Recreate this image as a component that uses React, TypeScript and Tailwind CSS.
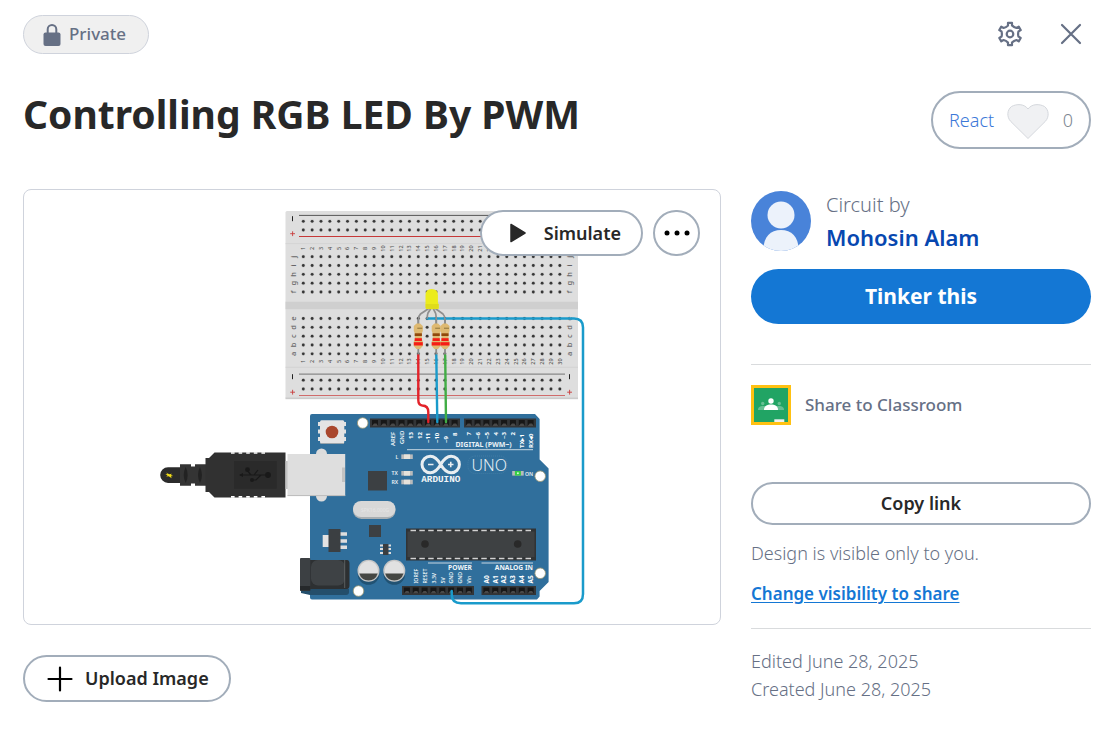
import type { ReactNode } from 'react'

const PITCH = 8.846
const range = (n: number) => Array.from({ length: n }, (_, i) => i)

function Side({ x, y, size = 5, fill = '#fff', bold = false, anchor = 'start', children }: {
  x: number; y: number; size?: number; fill?: string; bold?: boolean; anchor?: 'start' | 'middle' | 'end'; children: ReactNode
}) {
  return (
    <text transform={`translate(${x} ${y}) rotate(-90)`} fontSize={size} fill={fill} fontWeight={bold ? 700 : 500} textAnchor={anchor}>
      {children}
    </text>
  )
}

function Breadboard() {
  const rows = [221.3, 230, 256.7, 265.5, 274.3, 283.2, 292, 318.5, 327.3, 336.2, 345, 353.8, 380.2, 389]
  const letters: [string, number][] = [
    ['j', 256.7], ['i', 265.5], ['h', 274.3], ['g', 283.2], ['f', 292],
    ['e', 318.5], ['d', 327.3], ['c', 336.2], ['b', 345], ['a', 353.8],
  ]
  return (
    <g>
      <rect x="285.5" y="211" width="292.5" height="188" rx="1.5" fill="#dedede" />
      <rect x="285.5" y="397.5" width="292.5" height="1.7" fill="#cbcbcb" />
      <path d="M285.5 243.6H578M285.5 367.3H578" stroke="#d0d0d0" strokeWidth=".8" />
      <rect x="285.5" y="301.7" width="292.5" height="7.5" fill="#cfcfcf" />
      <path d="M299 215.4H565" stroke="#555" strokeWidth="1" />
      <path d="M299 374.2H565" stroke="#888" strokeWidth="1.2" />
      <path d="M299 236.5H565" stroke="#c63838" strokeWidth="1" />
      <path d="M299 395.5H565" stroke="#cf6b6b" strokeWidth="1.2" />
      {rows.map((y) => range(30).map((i) => (
        <g key={`${y}-${i}`}>
          <circle cx={303.3 + i * PITCH} cy={y} r="2" fill="#c6c6c6" />
          <circle cx={303.3 + i * PITCH} cy={y} r="1.4" fill="#363636" />
        </g>
      )))}
      {range(30).map((i) => (
        <g key={i}>
          <Side x={305.2 + i * PITCH} y={248.5} size={5.5} fill="#555" anchor="middle">{i + 1}</Side>
          <Side x={305.2 + i * PITCH} y={361.5} size={5.5} fill="#555" anchor="middle">{i + 1}</Side>
        </g>
      ))}
      {letters.map(([c, y]) => (
        <g key={c}>
          <Side x={295.5} y={y} size={7.5} fill="#666" anchor="middle">{c}</Side>
          <Side x={571.5} y={y} size={7.5} fill="#666" anchor="middle">{c}</Side>
        </g>
      ))}
      <path d="M292.5 216.2v5M292.5 374.2v5M569.5 374.2v5" stroke="#222" strokeWidth="1" />
      <path d="M290.2 233.7h4.8M292.6 231.3v4.8M290.2 392.2h4.8M292.6 389.8v4.8M567.2 392.2h4.8M569.6 389.8v4.8" stroke="#c83c3c" strokeWidth=".9" />
    </g>
  )
}

function Resistor({ x }: { x: number }) {
  return (
    <g>
      <path d={`M${x} 320V356`} stroke="#8c8c8c" strokeWidth="1.8" />
      <path d={`M${x - 1.8} 323.4h3.6l2.7 2.6v5l-1 2.5v6l1 2v4.5l-2.7 3h-3.6l-2.7-3v-4.5l1-2v-6l-1-2.5v-5z`} fill="#deb971" />
      <path d={`M${x - 1} 328.3h5`} stroke="#a4874a" strokeWidth="1.4" />
      <rect x={x - 3.6} y="333.3" width="7.2" height="2.7" fill="#90490c" />
      <rect x={x - 3.6} y="338.2" width="7.2" height="2.8" fill="#f51d16" />
      <rect x={x - 4.5} y="342.2" width="9" height="3.3" fill="#f51d16" />
    </g>
  )
}

function Header({ x, y, width, start, count }: { x: number; y: number; width: number; start: number; count: number }) {
  return (
    <g>
      <rect x={x} y={y} width={width} height="9" fill="#333537" />
      {range(count).map((i) => (
        <g key={i}>
          <rect x={start + i * PITCH - 3} y={y + 1.5} width="6" height="6" fill="#171717" />
          <path d={`M${start + i * PITCH - 3} ${y + 7.5}l2-2.5h2.5l1.5 2.5z`} fill="#494949" />
        </g>
      ))}
    </g>
  )
}

function BoardLed({ x, y, lit }: { x: number; y: number; lit?: boolean }) {
  return (
    <g>
      <rect x={x} y={y - 2.3} width="11.5" height="4.6" fill="#b9bbbc" />
      <rect x={x + 2.7} y={y - 2.3} width="6" height="4.6" fill={lit ? '#35cf45' : '#e6e2da'} />
      {lit && <circle cx={x + 5.7} cy={y} r="1" fill="#d9ffd9" />}
    </g>
  )
}

function UsbCable() {
  return (
    <g>
      <path d="M181 467.3h-13a7.8 7.8 0 0 0 0 15.6h13z" fill="#2b2b2b" />
      <path d="M166 472.600l3.200 1.600 2.800-.4-1.200 1.200 2.400 1-2.200.3.700 1.900-3-1.900-2.400.2 1.300-1.200-2.300-1.100 2.200-.2z" fill="#f2dd18" />
      <path d="M180 464.2h11v2.2h4v-2.2h11v21.6h-11v-2.4h-4v2.4h-11z" fill="#343434" />
      <path d="M185.7 467q4 8.5 0 16-4-8 0-16M200 467q4 8.5 0 16-4-8 0-16" fill="#222" />
      <path d="M205.5 458h3.5l5.5-5.6H285.500v45h-71l-5.500-5.500h-3.500z" fill="#313131" />
      <path d="M231 453h34M231 496.900h34" stroke="#fff" strokeWidth="1.700" strokeDasharray="3.600 4" />
      <rect x="234" y="461" width="42.700" height="27.700" fill="#2a2a2a" />
      <path d="M240 475h28M251 475l-4.500-5.300M251 475h3l4-5M252 480h4l5-5" stroke="#191919" strokeWidth="1.200" fill="none" />
      <path d="M239 475l4-2v4z" fill="#191919" />
      <circle cx="247.500" cy="469.700" r="2.400" fill="#191919" />
      <circle cx="252" cy="480" r="2" fill="#191919" />
      <circle cx="268" cy="475" r="2.900" fill="#191919" />
      <rect x="285.500" y="461" width="2.500" height="28" fill="#c3c3c3" />
      <circle cx="321.500" cy="454" r="5.500" fill="#dcdcdc" />
      <circle cx="321.500" cy="496" r="5.500" fill="#dcdcdc" />
      <rect x="287.500" y="454" width="57.700" height="42" fill="#dedede" />
      <path d="M287.500 495.600h57.700" stroke="#bbb" />
      <rect x="342" y="467.500" width="3" height="14.500" fill="#c2c2c2" />
    </g>
  )
}

function Arduino() {
  const digital = ['AREF', 'GND', '13', '12', '~11', '~10', '~9', '8']
  const digital2 = ['7', '~6', '~5', '4', '~3', '2', 'TX▸1', 'RX◂0']
  const power = ['IOREF', 'RESET', '3.3V', '5V', 'GND', 'GND', 'Vin']
  return (
    <g>
      <path d="M312 414H535l4.600 5v40.500l9 9V582l-9 9v5.500l-2.600 3H312a2 2 0 0 1-2-2V416a2 2 0 0 1 2-2z" fill="#306f9c" />
      {[[362.700, 423], [540.200, 476.200], [540.200, 573.300], [358.500, 591]].map(([x, y]) => (
        <circle key={`${x}-${y}`} cx={x} cy={y} r="5.300" fill="#fff" stroke="#9b9670" strokeWidth=".8" />
      ))}
      <path d="M318 422h28v4h-28zM318 429.500h28v4h-28zM318 437h28v4h-28z" fill="#e2e2e2" />
      <rect x="320" y="420.200" width="24.300" height="23.300" rx="1.500" fill="#e4e4e4" />
      <path d="M320.500 443.500h23.500" stroke="#9aa5ac" />
      <circle cx="332" cy="432" r="6.300" fill="#a9472d" />

      <Header x={370} y={418.500} width={90} start={375} count={10} />
      <Header x={464} y={418.500} width={72} start={468.700} count={8} />
      <Header x={402} y={586} width={72} start={406.900} count={8} />
      <Header x={481.500} y={586} width={54.500} start={486.400} count={6} />

      {digital.map((t, i) => (
        <Side key={t} x={395 + i * PITCH} y={i === 0 ? 446 : i === 1 ? 444 : t.startsWith('~') ? 443 : i === 7 ? 436 : 439} size={6} bold={i > 1}>{t}</Side>
      ))}
      {digital2.map((t, i) => (
        <Side key={t} x={471 + i * PITCH} y={i > 5 ? 448 : t.startsWith('~') ? 439 : 435.500} size={6} bold>{t}</Side>
      ))}
      <text x="455.500" y="447" fontSize="7" fontWeight="700" fill="#e8f0f5">DIGITAL (PWM~)</text>
      <path d="M407 449.700H533" stroke="#c7d7e2" strokeWidth="1" />

      <g fontSize="5.200" fontWeight="600" fill="#e8f0f5">
        <text x="395.500" y="458.600">L</text>
        <text x="391.500" y="475.300">TX</text>
        <text x="391.500" y="484">RX</text>
        <text x="525" y="475.500">ON</text>
      </g>
      <BoardLed x={401.300} y={456.700} />
      <BoardLed x={401.300} y={473.300} />
      <BoardLed x={401.300} y={482} />
      <BoardLed x={512.200} y={473.300} lit />

      <path d="M440.700 464.500c-3-5.400-6-8.300-10.400-8.300a8.300 8.300 0 0 0 0 16.600c4.400 0 7.400-3 10.400-8.300s6-8.300 10.400-8.300a8.300 8.300 0 0 1 0 16.600c-4.400 0-7.400-3-10.400-8.300z" fill="none" stroke="#e9eef1" strokeWidth="3" />
      <path d="M428 464.500h5.500M448 464.500h5.500M450.750 461.750v5.500" stroke="#e9eef1" strokeWidth="1.600" />
      <text x="440.800" y="482.300" fontSize="9.300" fontWeight="700" fill="#f2f5f7" textAnchor="middle" fontFamily="Liberation Mono, monospace" textRendering="geometricPrecision">
        ARDUINO
      </text>
      <rect x="468" y="456" width="39" height="17.500" rx="7" fill="none" stroke="#5289ad" strokeWidth=".5" strokeDasharray="1 1" />
      <text x="471.500" y="470.600" fontSize="16" fontWeight="300" fill="#e8f0f5">UNO</text>

      <rect x="368" y="471" width="19" height="19.500" fill="#3c4043" />
      <rect x="369" y="525" width="12" height="12" fill="#3c4043" />
      <rect x="353" y="502" width="42.500" height="17" rx="8.500" fill="#a8aeb2" />
      <rect x="353" y="501" width="42.500" height="16" rx="8" fill="#d8d8d8" />
      <text x="361" y="511.500" fontSize="5" fill="#e6e6e6">SPK16.000G</text>
      <path d="M380 545.500h11M380 549h11M380 553h11" stroke="#dedede" strokeWidth="2" />
      <rect x="383" y="544" width="5.500" height="11" fill="#3a3e41" />

      <rect x="322.700" y="535" width="7" height="12" fill="#e3e3e3" />
      <path d="M340 534h7M340 541h7M340 547.300h7" stroke="#dedede" strokeWidth="3.600" />
      <rect x="328.500" y="529" width="12" height="23" fill="#3b3f42" />

      <rect x="406" y="528.500" width="130" height="32" fill="#303335" />
      <rect x="407.500" y="531.500" width="127" height="25.500" fill="#3e4143" />
      {range(14).map((i) => (
        <path key={i} d={`M${410.500 + i * PITCH} 530.500h5.500m0 28h-5.500`} stroke="#d2d2d2" strokeWidth="1.300" />
      ))}
      <circle cx="425" cy="544" r="3.800" fill="#292929" />
      <circle cx="517.700" cy="544" r="3.800" fill="#292929" />

      {[368.500, 394.300].map((x) => (
        <g key={x}>
          <circle cx={x} cy="574" r="10.800" fill="#215273" />
          <circle cx={x} cy="570.700" r="11" fill="#c6c6c6" />
          <circle cx={x} cy="570.700" r="9.600" fill="#e1e1e1" />
          <path d={`M${x - 9.200} 573.600h18.400a9.600 9.600 0 0 1-18.400 0z`} fill="#454743" />
        </g>
      ))}

      <path d="M301 589h48v3a3 3 0 0 1-3 3h-36l-9-2z" fill="#244e6b" />
      <path d="M310 560h37q2.500 0 2.500 4v21q0 4-2.500 4h-37z" fill="#2d3032" />
      <rect x="311" y="560" width="34" height="25.500" rx="7" fill="#3e4245" />
      <path d="M344.700 560v28" stroke="#66696b" strokeWidth=".8" />
      <rect x="300" y="558" width="10.300" height="33" rx="1" fill="#3c4043" />
      <path d="M300 586h10.300v4.500H300z" fill="#26292b" />

      <path d="M428 563H472M481.500 563H533" stroke="#c7d7e2" strokeWidth="1" />
      <g fontSize="6.700" fontWeight="700" fill="#f1f5f8" textAnchor="end">
        <text x="472" y="570">POWER</text>
        <text x="533" y="570">ANALOG IN</text>
      </g>
      {power.map((t, i) => <Side key={i} x={418 + i * PITCH} y={583.500} size={5.200}>{t}</Side>)}
      {range(6).map((i) => <Side key={i} x={488.800 + i * PITCH} y={583.500} size={6.500} bold>{`A${i}`}</Side>)}
    </g>
  )
}

function Circuit() {
  return (
    <svg viewBox="24 190 696 434" className="block w-full font-['Noto_Sans',sans-serif]" role="img" aria-label="Circuit">
      <Breadboard />
      <Arduino />
      <UsbCable />
      <g fill="none" strokeLinecap="round">
        <path d="M427.300 318.500H574q9 0 9 9V594q0 9.300-9 9.300H461q-9.300 0-9.300-9V591" stroke="#1a9bcb" strokeWidth="2.500" />
        <g stroke="#8f8f8f" strokeWidth="1.700">
          <path d="M428 309l-7.500 5q-2.200 2-2.200 6v4M430.500 309l-2.500 4q-.8 2-.8 5M433.500 309l2 4q.8 2 .8 11M436 309l7 5q2 2 2 6v4" />
        </g>
      </g>
      <Resistor x={418.300} />
      <Resistor x={436.200} />
      <Resistor x={445} />
      <g fill="none" strokeWidth="2.400" strokeLinecap="round">
        <path d="M418.300 355.500V400q0 5 4 5.500 6 .3 6 6.500V422" stroke="#e3232a" />
        <path d="M436.300 355.500L437.300 422" stroke="#1a9bcb" />
        <path d="M445.200 355.500L446 422" stroke="#41ad45" />
      </g>
      <path d="M425.500 302.500v-7.500q0-6 6.200-6t6.200 6v7.500l.7 2v4.500h-12.500l-.6-2z" fill="#ecec1d" />
      <path d="M425.700 304h12.900v4.300q-6.500 2-12.900 0z" fill="#dfdc1c" />
    </svg>
  )
}

function LockIcon() {
  return (
    <svg width="18" height="24" viewBox="0 0 18 24" aria-hidden="true">
      <path d="M4.700 11V6.200a4.300 4.300 0 0 1 8.600 0V11" fill="none" stroke="#667085" strokeWidth="2" />
      <rect x=".5" y="9.500" width="17" height="13.500" rx="2" fill="#667085" />
    </svg>
  )
}

function gearPath() {
  const at = (x: number, y: number, deg: number) => {
    const a = (deg * Math.PI) / 180
    return `${(13 + x * Math.cos(a) - y * Math.sin(a)).toFixed(2)} ${(13 + x * Math.sin(a) + y * Math.cos(a)).toFixed(2)}`
  }
  const teeth = range(6).map((i) => {
    const d = i * 60
    return `${i ? 'L' : 'M'}${at(-2, -8.6, d)}L${at(-2, -11.2, d)}L${at(2, -11.2, d)}L${at(2, -8.6, d)}Q${at(3.9, -6.7, d)} ${at(-2, -8.6, d + 60)}`
  })
  return `${teeth.join('')}Z`
}

function GearIcon() {
  return (
    <svg width="26" height="26" viewBox="0 0 26 26" fill="none" stroke="#667085" strokeWidth="2.200" strokeLinejoin="round" aria-hidden="true">
      <path d={gearPath()} />
      <circle cx="13" cy="13" r="3.300" />
    </svg>
  )
}

function ClassroomIcon() {
  return (
    <svg width="40" height="40" viewBox="0 0 40 40" aria-hidden="true">
      <rect width="40" height="40" fill="#ffc112" />
      <rect x="3" y="3" width="34" height="34" fill="#21a464" />
      <g fill="#66bf93">
        <circle cx="11.700" cy="18.500" r="1.700" />
        <circle cx="28.300" cy="18.500" r="1.700" />
        <path d="M7 25c0-3 2-4 5-4h16c3 0 5 1 5 4z" />
      </g>
      <circle cx="20" cy="16" r="2.700" fill="#fff" />
      <path d="M13 25c0-4 3-5.500 7-5.500s7 1.500 7 5.500z" fill="#fff" />
      <rect x="23.300" y="34.300" width="10" height="2.700" fill="#f1f1f1" />
    </svg>
  )
}

function Avatar() {
  return (
    <svg width="60" height="60" viewBox="0 0 60 60" className="shrink-0" aria-hidden="true">
      <defs>
        <clipPath id="avatar"><circle cx="30" cy="30" r="30" /></clipPath>
      </defs>
      <g clipPath="url(#avatar)">
        <rect width="60" height="60" fill="#4983d9" />
        <circle cx="30" cy="24" r="13.500" fill="#ecf2fb" />
        <path d="M12.500 58c0-12 7-19 17.500-19s17.500 7 17.500 19v4h-35z" fill="#ecf2fb" />
      </g>
    </svg>
  )
}

export default function App() {
  return (
    <div className="min-h-screen bg-white pt-[15px] pr-4 pb-6 pl-[23px] font-['Noto_Sans',sans-serif] text-[18px] text-[#667085]">
      <header className="flex items-start justify-between">
        <div className="flex h-[39px] items-center gap-2 rounded-full border border-[#cfd3dc] bg-[#f0f0f0] pr-[22px] pl-[19px] text-[17px] leading-6 font-medium">
          <LockIcon />
          <span className="pb-0.5">Private</span>
        </div>
        <div className="flex items-center gap-[35px] pt-1.5">
          <button type="button" aria-label="Settings" className="cursor-pointer">
            <GearIcon />
          </button>
          <button type="button" aria-label="Close" className="mr-[7px] cursor-pointer">
            <svg width="26" height="26" viewBox="0 0 26 26" stroke="#667085" strokeWidth="2.200" strokeLinecap="round" aria-hidden="true">
              <path d="M4 4l18 18M22 4L4 22" />
            </svg>
          </button>
        </div>
      </header>

      <div className="mt-[37px] flex items-start justify-between">
        <h1 className="text-[39px] leading-[46px] font-bold text-[#282828]">Controlling RGB LED By PWM</h1>
        <button type="button" className="flex h-[58px] w-40 cursor-pointer items-center justify-between rounded-full border-2 border-[#a2adba] px-4">
          <span className="font-light text-[#3c78d8]">React</span>
          <svg width="42" height="38" viewBox="0 0 42 38" aria-hidden="true">
            <path d="M21 37.500L3.800 20.500C-.5 16 0 9 4.500 5.500 9.500 2.800 17 2.500 21 8 25 2.500 32.500 2.800 37.500 5.500 42 9 42.500 16 38.200 20.500z" fill="#f0f1f3" stroke="#d5d8dd" />
          </svg>
          <span className="font-light text-[#7d8791]">0</span>
        </button>
      </div>

      <main className="mt-10 flex items-start gap-[30px]">
        <section className="min-w-0 flex-1">
          <div className="relative overflow-hidden rounded-lg border border-[#cfd3dc]">
            <Circuit />
            <div className="absolute top-5 right-5 flex gap-2.5 text-[#282828]">
              <button type="button" className="flex h-[46px] cursor-pointer items-center gap-[18px] rounded-full border-2 border-[#a2adba] bg-white pr-5 pl-7 font-semibold">
                <svg width="16" height="20" viewBox="0 0 16 20" aria-hidden="true">
                  <path d="M1 1.500l14 8.500L1 18.500z" fill="#282828" stroke="#282828" strokeWidth="1.500" strokeLinejoin="round" />
                </svg>
                Simulate
              </button>
              <button type="button" aria-label="More" className="flex h-[46px] w-[47px] cursor-pointer items-center justify-center rounded-full border-2 border-[#a2adba] bg-white">
                <svg width="26" height="6" viewBox="0 0 26 6" aria-hidden="true">
                  <circle cx="3" cy="3" r="2.500" />
                  <circle cx="13" cy="3" r="2.500" />
                  <circle cx="23" cy="3" r="2.500" />
                </svg>
              </button>
            </div>
          </div>
          <button type="button" className="mt-[30px] flex h-[47px] cursor-pointer items-center gap-3 rounded-full border-2 border-[#a2adba] pr-5 pl-[22px] font-semibold text-[#282828]">
            <svg width="26" height="26" viewBox="0 0 26 26" stroke="#000" strokeWidth="2.200" strokeLinecap="round" aria-hidden="true">
              <path d="M13 1.500v23M1.500 13h23" />
            </svg>
            Upload Image
          </button>
        </section>

        <aside className="w-[340px] shrink-0">
          <div className="flex items-center gap-[15px]">
            <Avatar />
            <div className="leading-8">
              <p className="text-[20px] font-light">Circuit by</p>
              <a href="#profile" className="block text-[22px] font-semibold text-[#0747b0]">Mohosin Alam</a>
            </div>
          </div>
          <button type="button" className="mt-4 h-[55px] w-full cursor-pointer rounded-full bg-[#1477d4] text-[21px] font-bold text-white">
            Tinker this
          </button>
          <hr className="mt-10 border-[#d9dbdd]" />
          <a href="#classroom" className="mt-5 flex items-center gap-3.5 text-[17px] font-medium">
            <ClassroomIcon />
            Share to Classroom
          </a>
          <button type="button" className="mt-[57px] h-[43px] w-full cursor-pointer rounded-full border-2 border-[#a2adba] font-semibold text-[#282828]">
            Copy link
          </button>
          <p className="mt-3.5 leading-7 font-light">Design is visible only to you.</p>
          <a href="#visibility" className="mt-[13px] block text-[17px] leading-7 font-semibold text-[#1477d4] underline underline-offset-2">
            Change visibility to share
          </a>
          <hr className="mt-5 mb-[18px] border-[#d9dbdd]" />
          <div className="leading-7 font-light">
            <p>Edited June 28, 2025</p>
            <p>Created June 28, 2025</p>
          </div>
        </aside>
      </main>
    </div>
  )
}
